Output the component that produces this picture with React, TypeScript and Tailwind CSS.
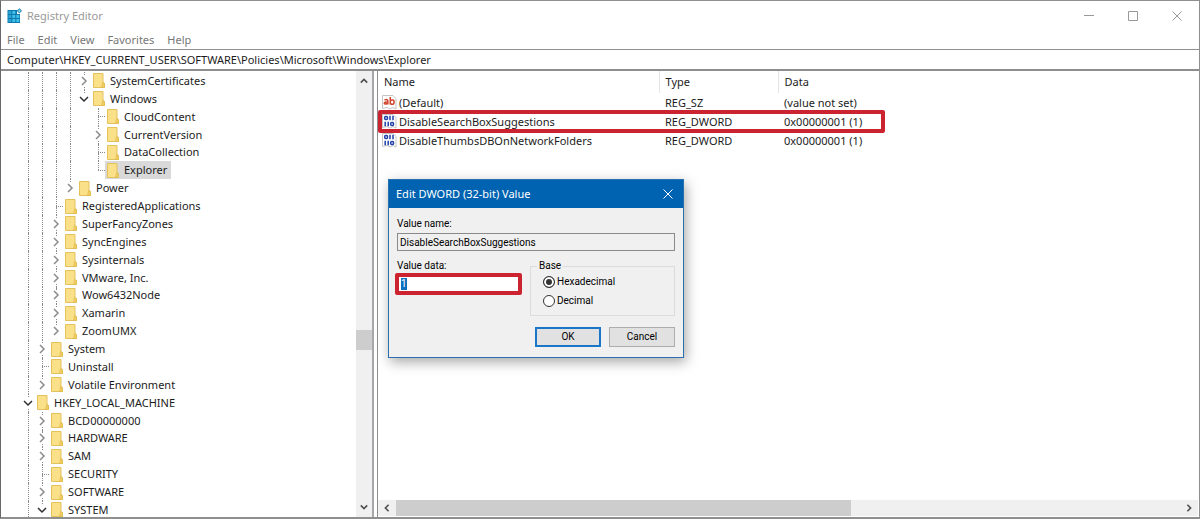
import React, { useState } from 'react';
import clsx from 'clsx';

type TreeNode = {
    label: string;
    depth: number;
    state?: 'open' | 'closed';
    selected?: boolean;
};

const menuItems = ['File', 'Edit', 'View', 'Favorites', 'Help'];

const treeNodes: TreeNode[] = [
    { label: 'SystemCertificates', depth: 4, state: 'closed' },
    { label: 'Windows', depth: 4, state: 'open' },
    { label: 'CloudContent', depth: 5 },
    { label: 'CurrentVersion', depth: 5, state: 'closed' },
    { label: 'DataCollection', depth: 5 },
    { label: 'Explorer', depth: 5, selected: true },
    { label: 'Power', depth: 3, state: 'closed' },
    { label: 'RegisteredApplications', depth: 2 },
    { label: 'SuperFancyZones', depth: 2, state: 'closed' },
    { label: 'SyncEngines', depth: 2, state: 'closed' },
    { label: 'Sysinternals', depth: 2, state: 'closed' },
    { label: 'VMware, Inc.', depth: 2, state: 'closed' },
    { label: 'Wow6432Node', depth: 2, state: 'closed' },
    { label: 'Xamarin', depth: 2, state: 'closed' },
    { label: 'ZoomUMX', depth: 2, state: 'closed' },
    { label: 'System', depth: 1, state: 'closed' },
    { label: 'Uninstall', depth: 1 },
    { label: 'Volatile Environment', depth: 1, state: 'closed' },
    { label: 'HKEY_LOCAL_MACHINE', depth: 0, state: 'open' },
    { label: 'BCD00000000', depth: 1, state: 'closed' },
    { label: 'HARDWARE', depth: 1, state: 'closed' },
    { label: 'SAM', depth: 1, state: 'closed' },
    { label: 'SECURITY', depth: 1 },
    { label: 'SOFTWARE', depth: 1, state: 'closed' },
    { label: 'SYSTEM', depth: 1, state: 'open' },
];

const registryValues = [
    { name: '(Default)', type: 'REG_SZ', data: '(value not set)', kind: 'string' },
    { name: 'DisableSearchBoxSuggestions', type: 'REG_DWORD', data: '0x00000001 (1)', kind: 'binary', marked: true },
    { name: 'DisableThumbsDBOnNetworkFolders', type: 'REG_DWORD', data: '0x00000001 (1)', kind: 'binary' },
];

// True when another sibling on this level follows further down the tree
function continues(index: number, depth: number) {
    if (depth === 0) return true;
    for (const node of treeNodes.slice(index + 1)) {
        if (node.depth < depth) return false;
        if (node.depth === depth) return true;
    }
    return false;
}

function RegeditIcon() {
    return (
        <svg width="16" height="16" viewBox="0 0 16 16" aria-hidden="true">
            <path d="M0.500 2h9.500v4h3v9h-12.500z" fill="#0d78ad" />
            <path d="M1.300 3h3v3h-3zM1.300 7h3v3h-3zM1.300 11h3v3h-3z" fill="#2aa3d4" />
            <path d="M5.300 3h3v3h-3zM5.300 7h3v3h-3zM5.300 11h3v3h-3zM9.300 7h3v3h-3zM9.300 11h3v3h-3z" fill="#3fc0ea" />
            <path d="M12.300 0.800l2.200 1.900-2 2.200-2.200-1.900z" fill="#7fd3f0" stroke="#1a7dac" />
        </svg>
    );
}

function FolderIcon() {
    return (
        <svg width="12" height="15" viewBox="0 0 12 15" aria-hidden="true" className="shrink-0">
            <path d="M0.500 0.500h9.500v9l1.500 1v4h-11z" fill="#fbe08a" stroke="#e3c25c" />
            <path d="M9.500 9.500l2 1v4h-3z" fill="#f0cd62" stroke="#dfb94a" strokeWidth="0.600" />
        </svg>
    );
}

function ValueIcon({ kind }: { kind: string }) {
    return (
        <svg width="15" height="15" viewBox="0 0 15 15" aria-hidden="true" className="shrink-0">
            <path d="M0.500 0.500h10.500l3 3v10.500l-3-1.500-3 1.500-3-1.500-4.500 1z" fill="#fff" stroke="#c4c4c4" />
            {kind === 'string' ? (
                <g fill="none" stroke="#d2452f" strokeWidth="1.600">
                    <path d="M2.500 5q3.300-1.200 3.300 1v3.500M5.800 7q-3.500-.2-3.500 1.200t3.500.3" />
                    <path d="M8.300 2v7.500M8.300 5.600q3.800-1.800 3.800 1.500t-3.800 1.700" />
                </g>
            ) : (
                <g fill="none" stroke="#1f3fa8" strokeWidth="1.500">
                    <rect x="2.700" y="2.500" width="2.800" height="3" rx="1" />
                    <path d="M8 1.800v4.400M11 1.800v4.400M3.200 7.800v4.400M6.200 7.800v4.400" />
                    <rect x="8.700" y="8.500" width="2.800" height="3" rx="1" />
                </g>
            )}
        </svg>
    );
}

// Angle used by the tree toggles and the scrollbar buttons, points right by default
function Angle({ className }: { className?: string }) {
    return (
        <svg width="10" height="10" viewBox="0 0 10 10" fill="none" stroke="currentColor" aria-hidden="true" className={className}>
            <path d="M3 1l4 4-4 4" />
        </svg>
    );
}

function TreeRow({ node, index }: { node: TreeNode; index: number }) {
    return (
        <li className="flex flex-1 min-h-0 whitespace-nowrap">
            {/* Guides of the parent levels */}
            {Array.from({ length: node.depth }, (_, level) => (
                <span key={level} className="flex w-3.5 shrink-0 justify-center">
                    {continues(index, level) && <span className="border-l border-dotted border-[#8a8a8a]" />}
                </span>
            ))}

            {/* Toggle or connector */}
            <span className="flex w-3.5 shrink-0 flex-col items-center">
                {node.state ? (
                    <>
                        <span className="flex-1 border-l border-dotted border-[#8a8a8a]" />
                        <button
                            type="button"
                            aria-label={`Toggle ${node.label}`}
                            className={clsx('flex h-3 items-center', node.state === 'open' ? 'text-[#303030]' : 'text-[#8c8c8c]')}
                        >
                            <Angle className={clsx('stroke-[1.5]', node.state === 'open' && 'rotate-90')} />
                        </button>
                        <span className={clsx('flex-1', continues(index, node.depth) && 'border-l border-dotted border-[#8a8a8a]')} />
                    </>
                ) : (
                    <>
                        <span className="flex-1 border-l border-dotted border-[#8a8a8a]" />
                        <span className="w-1/2 self-end border-t border-dotted border-[#8a8a8a]" />
                        <span className={clsx('flex-1', continues(index, node.depth) && 'border-l border-dotted border-[#8a8a8a]')} />
                    </>
                )}
            </span>

            {/* Key */}
            <span className={clsx('flex items-center gap-[5px] pl-0.5 pr-1', node.selected && 'bg-[#d9d9d9]')}>
                <FolderIcon />
                {node.label}
            </span>
        </li>
    );
}

function TreePane() {
    return (
        <nav aria-label="Registry keys" className="flex w-[373px] shrink-0 border-r-2 border-[#a5a7ab]">
            <div className="flex flex-1 overflow-hidden pl-5 pt-px">
                <ul className="-mb-0.5 flex flex-col">
                    {treeNodes.map((node, index) => (
                        <TreeRow key={index} node={node} index={index} />
                    ))}
                </ul>
            </div>

            {/* Vertical scrollbar */}
            <div className="flex w-4 flex-col bg-[#f0f0f0] text-[#505050]">
                <button type="button" aria-label="Scroll up" className="flex h-5 items-center justify-center">
                    <Angle className="size-2 -rotate-90 stroke-2" />
                </button>
                <div className="flex flex-1 flex-col">
                    <div className="grow-[239]" />
                    <div className="h-5 bg-[#cdcdcd]" />
                    <div className="grow-[147]" />
                </div>
                <button type="button" aria-label="Scroll down" className="flex h-5 items-center justify-center">
                    <Angle className="size-2 rotate-90 stroke-2" />
                </button>
            </div>
        </nav>
    );
}

function ValuesPane() {
    return (
        <section className="flex min-w-0 flex-1 flex-col border-l border-[#8e8e8e]">
            <div className="flex-1">
                <table className="w-full table-fixed text-left">
                    <thead>
                        <tr className="h-[22px]">
                            <th className="w-[281px] border-r border-[#e5e5e5] pl-1.5 font-normal">Name</th>
                            <th className="w-[119px] border-r border-[#e5e5e5] pl-1.5 font-normal">Type</th>
                            <th className="pl-1.5 font-normal">Data</th>
                        </tr>
                    </thead>
                    <tbody>
                        {registryValues.map((value) => (
                            <tr key={value.name} className="relative h-[19px]">
                                <td className="pl-1">
                                    <span className="flex items-center gap-0.5">
                                        <ValueIcon kind={value.kind} />
                                        {value.name}
                                    </span>
                                    {/* Red highlight around the row */}
                                    {value.marked && (
                                        <span className="pointer-events-none absolute -inset-y-0.5 left-0 w-[507px] rounded-xs border-4 border-[#cb2430]" />
                                    )}
                                </td>
                                <td className="pl-1.5">{value.type}</td>
                                <td className="pl-1.5">{value.data}</td>
                            </tr>
                        ))}
                    </tbody>
                </table>
            </div>

            {/* Horizontal scrollbar */}
            <div className="mb-px flex h-4 bg-[#f0f0f0] text-[#505050]">
                <button type="button" aria-label="Scroll left" className="flex w-[18px] items-center justify-center">
                    <Angle className="size-2 rotate-180 stroke-2" />
                </button>
                <div className="flex-1">
                    <div className="h-full w-[58%] bg-[#cdcdcd]" />
                </div>
                <button type="button" aria-label="Scroll right" className="flex w-[18px] items-center justify-center">
                    <Angle className="size-2 stroke-2" />
                </button>
            </div>
        </section>
    );
}

function BaseOption({ label, checked, onChange }: { label: string; checked: boolean; onChange: () => void }) {
    return (
        <label className="flex items-center gap-0.5">
            <input
                type="radio"
                name="base"
                checked={checked}
                onChange={onChange}
                className="size-3 appearance-none rounded-full border border-[#333] bg-white checked:bg-[#333] checked:shadow-[inset_0_0_0_2px_#fff]"
            />
            {label}
        </label>
    );
}

function EditDialog() {
    const [base, setBase] = useState('Hexadecimal');

    return (
        <div
            role="dialog"
            aria-labelledby="dialog-title"
            className="absolute left-[387px] top-[178px] w-[296px] border border-[#2b6fae] bg-[#f0f0f0] font-['Roboto','Liberation_Sans',sans-serif] text-[10px] leading-4 text-black shadow-[2px_4px_12px_rgba(0,0,0,0.35)]"
        >
            <header className="flex h-7 items-center justify-between bg-[#0063b1] pl-[7px] font-['Noto_Sans','Open_Sans',sans-serif] text-white">
                <h2 id="dialog-title" className="text-[11px]">Edit DWORD (32-bit) Value</h2>
                <button type="button" aria-label="Close" className="flex h-full w-[31px] items-center justify-center">
                    <svg width="10" height="10" viewBox="0 0 10 10" stroke="currentColor" aria-hidden="true">
                        <path d="M0.500 0.500l9 9M9.500 0.500l-9 9" />
                    </svg>
                </button>
            </header>

            <form className="flex flex-col px-2 pb-2.5 pt-2">
                <label htmlFor="value-name">Value name:</label>
                <input
                    id="value-name"
                    readOnly
                    defaultValue="DisableSearchBoxSuggestions"
                    className="mt-px h-[18px] border border-[#8a8a8a] px-0.5"
                />

                <div className="mt-[7px] flex justify-between">
                    <div className="flex flex-col">
                        <label htmlFor="value-data">Value data:</label>
                        {/* Selected value */}
                        <div className="-ml-0.5 -mt-px flex h-[22px] w-[127px] items-center rounded-xs border-4 border-[#cb2430] bg-white pl-0.5">
                            <input
                                id="value-data"
                                defaultValue="1"
                                className="h-3 w-1.5 bg-[#0f6fc0] text-white outline-none"
                            />
                        </div>
                    </div>
                    <fieldset className="h-[58px] w-[145px] border border-[#dcdcdc] pl-3">
                        <legend className="-ml-1.5 px-0.5">Base</legend>
                        <div className="flex flex-col gap-[3px]">
                            <BaseOption label="Hexadecimal" checked={base === 'Hexadecimal'} onChange={() => setBase('Hexadecimal')} />
                            <BaseOption label="Decimal" checked={base === 'Decimal'} onChange={() => setBase('Decimal')} />
                        </div>
                    </fieldset>
                </div>

                <div className="mt-[11px] flex justify-end gap-2">
                    <button type="button" className="flex h-5 w-[66px] items-center justify-center border-2 border-[#1976c9] bg-[#e1e1e1]">OK</button>
                    <button type="button" className="flex h-5 w-[66px] items-center justify-center border border-[#adadad] bg-[#e1e1e1]">Cancel</button>
                </div>
            </form>
        </div>
    );
}

export default function App() {
    return (
        <div className="relative flex h-screen flex-col overflow-hidden border border-b-2 border-[#8f8f8f] border-l-[#686868] bg-white font-['Noto_Sans','Open_Sans',sans-serif] text-[11px] leading-4 text-[#1c1c1c]">
            {/* Title bar */}
            <header className="flex h-[30px] shrink-0 items-center justify-between pl-1.5 text-[#999]">
                <div className="flex items-center gap-1">
                    <RegeditIcon />
                    <h1>Registry Editor</h1>
                </div>
                <div className="flex h-full">
                    <button type="button" aria-label="Minimize" className="flex w-11 items-center justify-center">
                        <svg width="10" height="10" stroke="currentColor" aria-hidden="true"><path d="M0 4.500h10" /></svg>
                    </button>
                    <button type="button" aria-label="Maximize" className="flex w-11 items-center justify-center">
                        <svg width="10" height="10" fill="none" stroke="currentColor" aria-hidden="true"><path d="M0.500 0.500h9v9h-9z" /></svg>
                    </button>
                    <button type="button" aria-label="Close" className="flex w-11 items-center justify-center">
                        <svg width="10" height="10" stroke="currentColor" aria-hidden="true"><path d="M0.500 0.500l9 9M9.500 0.500l-9 9" /></svg>
                    </button>
                </div>
            </header>

            {/* Menu */}
            <div className="flex h-[18px] shrink-0 items-center gap-[13px] pl-1.5 text-[#777]">
                {menuItems.map((item) => (
                    <button key={item} type="button">{item}</button>
                ))}
            </div>

            {/* Address bar */}
            <input
                aria-label="Address"
                defaultValue="Computer\HKEY_CURRENT_USER\SOFTWARE\Policies\Microsoft\Windows\Explorer"
                className="h-[22px] shrink-0 border-b-2 border-t border-[#8e8e8e] pl-1.5 outline-none"
            />

            <main className="flex min-h-0 flex-1 gap-[3px] pr-px">
                <TreePane />
                <ValuesPane />
            </main>

            <EditDialog />
        </div>
    );
}
